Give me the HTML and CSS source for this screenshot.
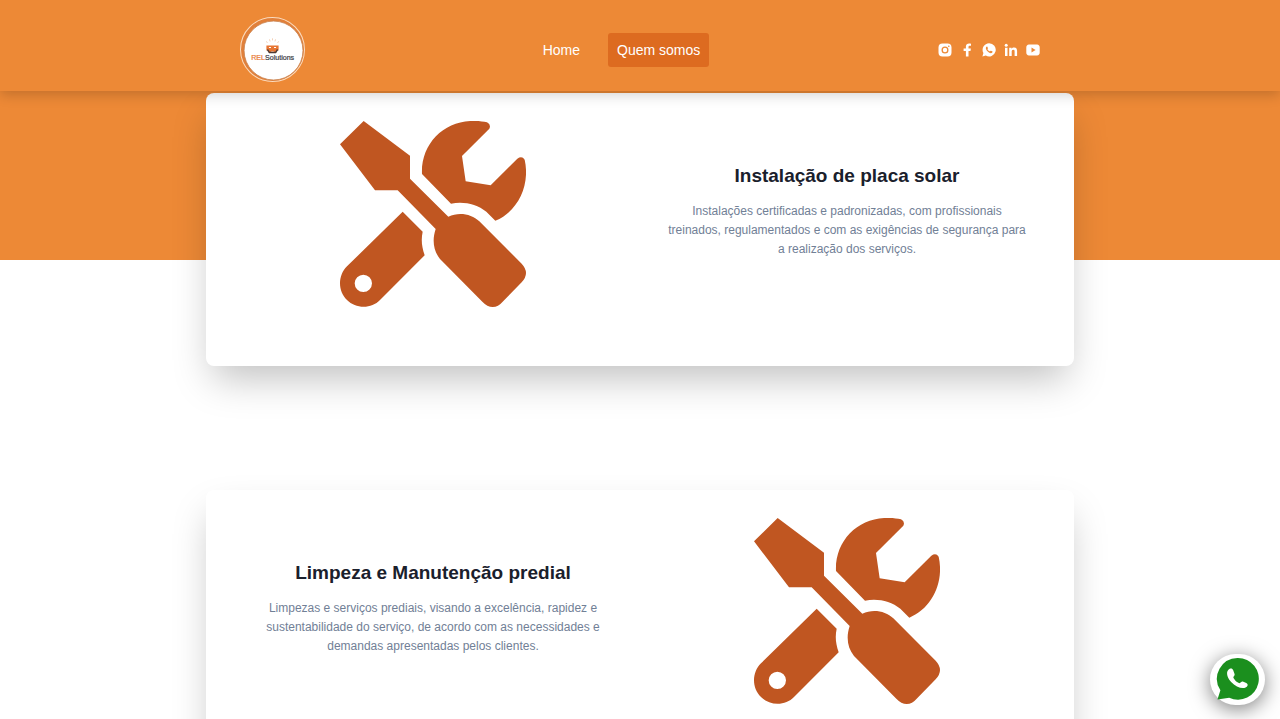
FILE: index.html
```html
<!DOCTYPE html>
<html lang="pt-BR">
<head>
<meta charset="utf-8">
<meta name="viewport" content="width=device-width, initial-scale=1">
<title>RELSolutions</title>
<link rel="stylesheet" href="styles.css">
</head>
<body>
<svg width="0" height="0" class="sprite" aria-hidden="true">
  <symbol id="tools" viewBox="45 48 558 558">
    <path d="M116 48L255 152V221L370 335C402 320 440 327 463 349L590 476Q616 504 590 532L533 590C516 611 491 611 472 590L345 462C325 437 321 405 332 372L218 256H150L45 118Z"/>
    <path d="M291 207C287 115 360 44 450 48C465 48 476 50 486 52Q499 58 493 71L411 153L422 229L497 241L577 161Q591 151 599 164C616 240 580 319 511 347L484 320C455 297 415 288 378 296Z"/>
    <path fill-rule="evenodd" d="M233 320L293 380C288 405 290 425 299 451L165 585C140 612 92 612 66 585C38 558 38 512 66 484ZM115 509a26 26 0 1 0 0 52a26 26 0 1 0 0-52Z"/>
  </symbol>
</svg>
<header class="header">
  <div class="header-inner">
    <a href="#" class="logo" aria-label="RELSolutions">
      <svg viewBox="0 0 64 64" role="img">
        <circle cx="32" cy="32" r="31.5" fill="#e1803a" stroke="#fbdcc0"/>
        <circle cx="33" cy="33" r="29" fill="#fff" stroke="#c98250" stroke-width=".8"/>
        <path d="M26 28h12v5h-2v2h-2l-1-1h-2l-1 1h-2v-2h-2z" fill="#e87532"/>
        <path d="M27 32l2 3h6l2-3" fill="none" stroke="#4b3a35" stroke-width="1.4"/>
        <path d="M28.500 30h2M33.500 30h2" stroke="#fff" stroke-width="1"/>
        <path d="M26 24l1 1.500M29 22l.6 2M32 21v2M35 22l-.6 2M38 24l-1 1.500" stroke="#f2c6a8" stroke-width=".8"/>
        <text x="11" y="42" class="logo-text"><tspan class="logo-rel">REL</tspan>Solutions</text>
      </svg>
    </a>
    <nav class="nav">
      <a href="#" class="nav-link">Home</a>
      <a href="#" class="nav-link active">Quem somos</a>
    </nav>
    <div class="social">
      <a href="#" aria-label="Instagram"><svg viewBox="0 0 14 14"><path fill-rule="evenodd" d="M4.500.5h5a4 4 0 0 1 4 4v5a4 4 0 0 1-4 4h-5a4 4 0 0 1-4-4v-5a4 4 0 0 1 4-4ZM7 3.500a3.500 3.500 0 1 0 0 7a3.500 3.500 0 1 0 0-7ZM10.800 2.400a.8.8 0 1 0 0 1.600a.8.8 0 0 0 0-1.600Z"/><circle cx="7" cy="7" r="2.200"/></svg></a>
      <a href="#" aria-label="Facebook"><svg viewBox="0 0 14 14"><path d="M8.500 13.500V8h2l.4-2.500H8.500V4.200c0-1 .4-1.400 1.500-1.400h1V.7C10.500.5 9.900.4 9.100.4 7.200.4 5.900 1.400 5.900 3.300v2.200H3.600V8h2.300v5.500Z"/></svg></a>
      <a href="#" aria-label="WhatsApp"><svg viewBox="0 0 14 14"><path fill-rule="evenodd" d="M7.100.3a6.600 6.600 0 1 1-3.300 12.300L.4 13.600l1-3.500A6.600 6.600 0 0 1 7.100.3ZM4.800 3.500c-1.600.8-1 2.900.4 4.400s3.700 3.200 5.100 1.600c.5-.7.300-1.100-.2-1.300L9 7.700c-.6-.2-.8.7-1.300.6-1-.3-1.800-1.100-2.200-2-.2-.4.600-.7.400-1.200l-.6-1.300c-.1-.3-.3-.3-.5-.3Z"/></svg></a>
      <a href="#" aria-label="LinkedIn"><svg viewBox="0 0 14 14"><circle cx="2.200" cy="2.300" r="1.500"/><path d="M1 4.800h2.500V13H1ZM5.200 4.800h2.400v1.100c.5-.8 1.300-1.300 2.500-1.300 2.400 0 3 1.500 3 3.700V13h-2.500V8.800c0-1.200-.1-2.100-1.300-2.100S7.700 7.600 7.700 8.800V13H5.200Z"/></svg></a>
      <a href="#" aria-label="YouTube"><svg viewBox="0 0 14 14"><path fill-rule="evenodd" d="M3 1.500h8a3 3 0 0 1 2.700 3v5a3 3 0 0 1-2.700 3H3a3 3 0 0 1-2.700-3v-5A3 3 0 0 1 3 1.500ZM5.500 4.600v4.800L9.600 7Z"/></svg></a>
    </div>
  </div>
</header>
<main class="services">
  <article class="card">
    <svg class="card-icon" aria-hidden="true"><use href="#tools"/></svg>
    <div class="card-text">
      <h2>Instalação de placa solar</h2>
      <p>Instalações certificadas e padronizadas, com profissionais treinados, regulamentados e com as exigências de segurança para a realização dos serviços.</p>
    </div>
  </article>
  <article class="card">
    <div class="card-text">
      <h2>Limpeza e Manutenção predial</h2>
      <p>Limpezas e serviços prediais, visando a excelência, rapidez e sustentabilidade do serviço, de acordo com as necessidades e demandas apresentadas pelos clientes.</p>
    </div>
    <svg class="card-icon" aria-hidden="true"><use href="#tools"/></svg>
  </article>
</main>
<a href="#" class="chat" aria-label="Conversar no WhatsApp">
  <svg viewBox="0 0 44 44"><path fill="#1b8f1e" d="M22.500 0a21.300 21.300 0 1 1-9 40.600L1.500 42.500l3-9.500A21.300 21.300 0 0 1 22.500 0Z"/><path fill="#fff" d="M14 11c-4 2-3.500 8 1.500 13.500S28 32.500 31.500 29.500c1.500-1.500 1-3-.5-3.800l-3-1.500c-2-.8-2.500 1-4 1.600-2.500-.6-5.500-3.500-6.300-6 .3-1.500 1.800-2 1.300-3.500l-1.500-4c-.6-1.700-2-2-3.500-1.300Z"/></svg>
</a>
</body>
</html>
```
FILE: styles.css
```css
* {
  box-sizing: border-box;
}

body {
  margin: 0;
  background: #fff;
  font-family: "Liberation Sans", Arial, sans-serif;
}

a {
  color: inherit;
  text-decoration: none;
}

.sprite {
  position: absolute;
}

.header {
  position: sticky;
  top: 0;
  z-index: 10;
  padding: 17px 20px 9px;
  background: #ed8936;
  box-shadow: 0 4px 12px rgba(0, 0, 0, 0.18);
}

.header-inner {
  display: flex;
  align-items: center;
  justify-content: space-between;
  max-width: 800px;
  margin: 0 auto;
}

.logo svg {
  display: block;
  width: 65px;
  height: 65px;
}

.logo-text {
  font-size: 7px;
  fill: #3a3a42;
  stroke: #3a3a42;
  stroke-width: 0.2px;
}

.logo-rel {
  fill: #e87532;
  stroke: #e87532;
}

.nav {
  display: flex;
  gap: 19px;
}

.nav-link {
  padding: 9px;
  border-radius: 3px;
  font-size: 14px;
  line-height: 16px;
  color: #fff;
}

.nav-link.active {
  background: #dd6b20;
}

.social {
  display: flex;
  gap: 8px;
}

.social svg {
  display: block;
  width: 14px;
  height: 14px;
  fill: #fff;
}

.services {
  display: flex;
  flex-direction: column;
  gap: 124px;
  padding: 2px 20px 124px;
  background: linear-gradient(#ed8936 169px, #fff 169px);
}

.card {
  display: grid;
  grid-template-columns: 1fr 1fr;
  justify-items: center;
  align-items: start;
  width: 100%;
  max-width: 868px;
  margin: 0 auto;
  padding: 28px 20px 59px;
  border-radius: 8px;
  background: #fff;
  box-shadow: 0 19px 39px -7px rgba(0, 0, 0, 0.25);
}

.card-icon {
  width: 186px;
  height: 186px;
  fill: #c05621;
}

.card-text {
  max-width: 364px;
  padding-top: 43px;
  text-align: center;
}

.card-text h2 {
  margin: 0 0 14px;
  font-size: 19px;
  line-height: 24px;
  color: #1a202c;
}

.card-text p {
  margin: 0;
  font-size: 12px;
  line-height: 19px;
  color: #718096;
}

.chat {
  position: fixed;
  right: 15px;
  bottom: 14px;
  z-index: 20;
  padding: 4px 6px;
  border-radius: 26px;
  background: #fff;
  box-shadow: 0 4px 20px rgba(0, 0, 0, 0.5);
}

.chat svg {
  display: block;
  width: 43px;
  height: 43px;
}
```
